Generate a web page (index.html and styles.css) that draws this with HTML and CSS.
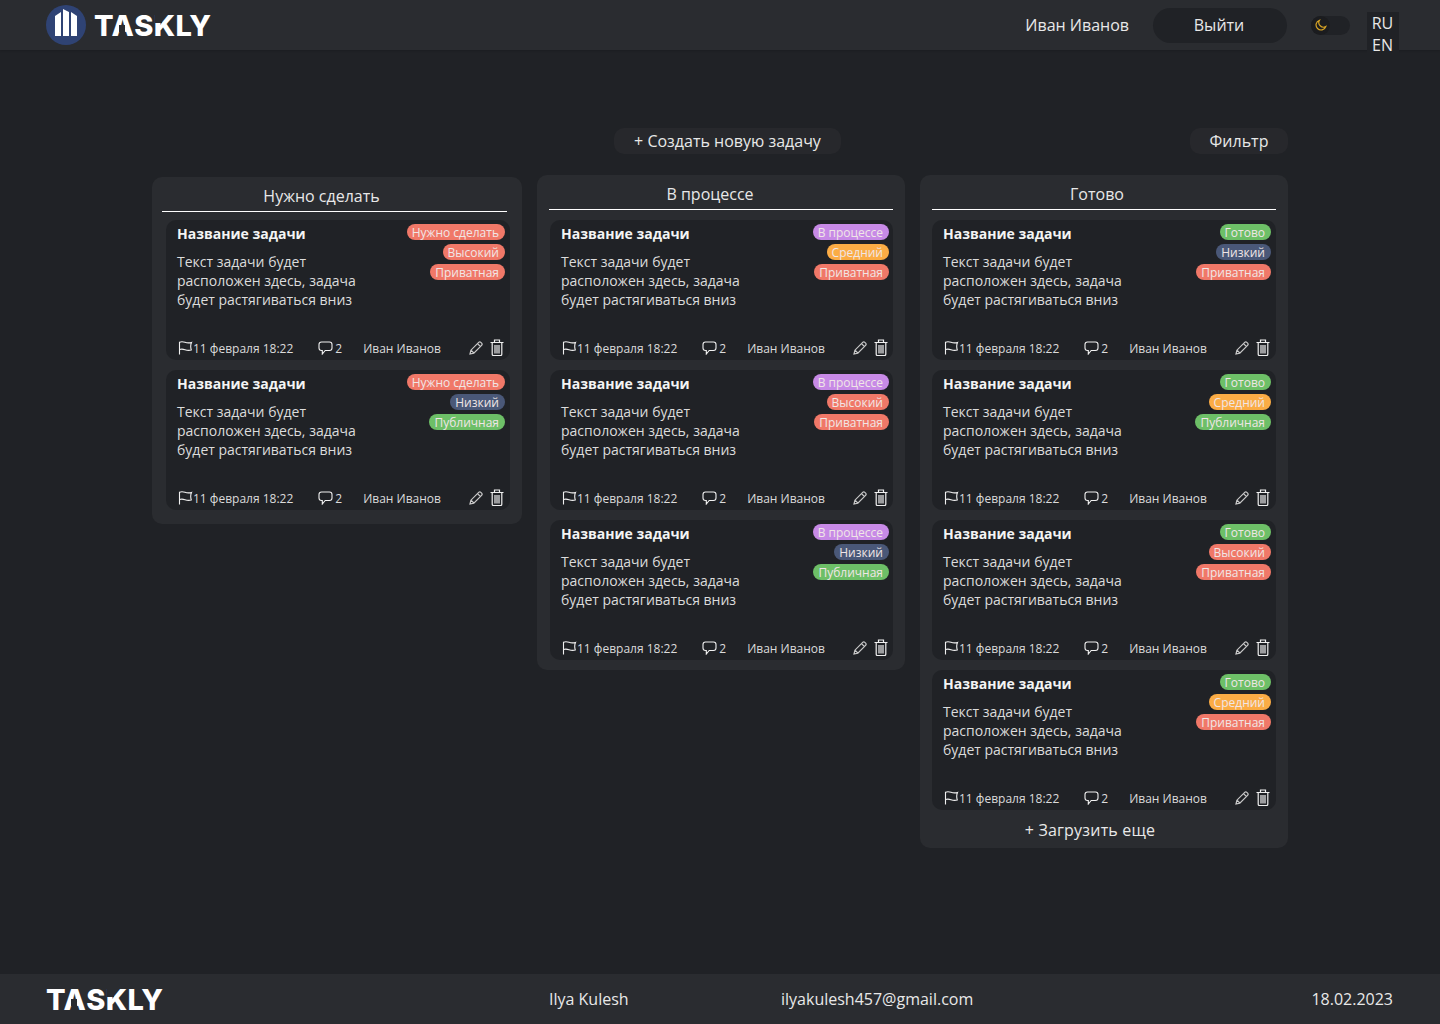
FILE: index.html
```html
<!DOCTYPE html>
<html lang="ru">
<head>
  <meta charset="UTF-8" />
  <title>Taskly</title>
  <link rel="stylesheet" href="styles.css">
</head>
<body>
  <svg class="sprite" width="0" height="0">
    <symbol id="i-flag" viewBox="0 0 15 14"><path d="M1.500 13.500V1.200c2-.8 3.600-.6 5.500.1 2 .7 4 .9 6.500.1-.8 1.700-.9 5.200-.2 7.600-2.300.7-4.300.4-6.300-.3-2-.7-3.600-.9-5.500-.2" fill="none" stroke="currentColor" stroke-width="1.100"/></symbol>
    <symbol id="i-comment" viewBox="0 0 15 14"><path d="M3.500 1h8c1.400 0 2.500 1 2.500 2.400v3.700c0 1.400-1.100 2.400-2.500 2.400H7.200L4.300 13V9.500h-.8C2.100 9.500 1 8.500 1 7.100V3.400C1 2 2.100 1 3.500 1z" fill="none" stroke="currentColor" stroke-width="1.100"/></symbol>
    <symbol id="i-pencil" viewBox="0 0 14 14"><path d="M1 13l.9-3.800L9.700 1.400c.6-.6 1.500-.6 2.100 0l.8.8c.6.6.6 1.500 0 2.100L4.800 12.100zM2 9.200l2.800 2.800M8.500 2.600l2.900 2.900" fill="none" stroke="currentColor" stroke-width="1.200"/></symbol>
    <symbol id="i-trash" viewBox="0 0 14 17"><path d="M.5 3.500h13M4.500 3.500V1h5v2.500M2.200 3.500v11.700c0 .8.500 1.300 1.300 1.300h7c.8 0 1.300-.5 1.300-1.300V3.500M5 6v8.500M7 6v8.500M9 6v8.500" fill="none" stroke="currentColor" stroke-width="1.200"/></symbol>
  </svg>

  <header class="topbar">
    <div class="brand">
      <svg class="brand-icon" viewBox="0 0 40 40" width="40" height="40">
        <circle cx="20" cy="20" r="20" fill="#2f4374"/>
        <path d="M9 11l6-4v24H9zM17 4l6 3v24h-6zM25 7l6 4v20h-6z" fill="#fff"/>
      </svg>
      <span class="logo">T<span class="logo-a">A</span>S<span class="logo-k">K</span>LY</span>
    </div>
    <span class="user">Иван Иванов</span>
    <button class="logout">Выйти</button>
    <div class="theme">
      <span class="theme-knob">
        <svg viewBox="0 0 12 12" width="12" height="12"><path d="M4.500 1.200A5 5 0 1 0 10.800 7.500 4.600 4.600 0 0 1 4.500 1.200z" fill="none" stroke="#d8a425" stroke-width="1.200"/></svg>
      </span>
    </div>
    <div class="lang"><span>RU</span><span>EN</span></div>
  </header>

  <main class="page">
    <div class="toolbar">
      <button class="tool tool-create">+ Создать новую задачу</button>
      <button class="tool tool-filter">Фильтр</button>
    </div>

    <div class="board">
      <section class="column column-first">
        <h2 class="column-title title-todo">Нужно сделать</h2>

        <article class="card">
          <div class="card-top">
            <div class="card-body">
              <h3>Название задачи</h3>
              <p>Текст задачи будет расположен здесь, задача будет растягиваться вниз</p>
            </div>
            <div class="tags">
              <span class="tag red">Нужно сделать</span>
              <span class="tag red">Высокий</span>
              <span class="tag red">Приватная</span>
            </div>
          </div>
          <div class="meta">
            <svg class="ico-flag"><use href="#i-flag"/></svg><span class="date">11 февраля 18:22</span>
            <svg class="ico-comment"><use href="#i-comment"/></svg><span class="count">2</span>
            <span class="author">Иван Иванов</span>
            <svg class="ico-pencil"><use href="#i-pencil"/></svg>
            <svg class="ico-trash"><use href="#i-trash"/></svg>
          </div>
        </article>

        <article class="card">
          <div class="card-top">
            <div class="card-body">
              <h3>Название задачи</h3>
              <p>Текст задачи будет расположен здесь, задача будет растягиваться вниз</p>
            </div>
            <div class="tags">
              <span class="tag red">Нужно сделать</span>
              <span class="tag navy">Низкий</span>
              <span class="tag green">Публичная</span>
            </div>
          </div>
          <div class="meta">
            <svg class="ico-flag"><use href="#i-flag"/></svg><span class="date">11 февраля 18:22</span>
            <svg class="ico-comment"><use href="#i-comment"/></svg><span class="count">2</span>
            <span class="author">Иван Иванов</span>
            <svg class="ico-pencil"><use href="#i-pencil"/></svg>
            <svg class="ico-trash"><use href="#i-trash"/></svg>
          </div>
        </article>
      </section>

      <section class="column column-second">
        <h2 class="column-title title-progress">В процессе</h2>

        <article class="card">
          <div class="card-top">
            <div class="card-body">
              <h3>Название задачи</h3>
              <p>Текст задачи будет расположен здесь, задача будет растягиваться вниз</p>
            </div>
            <div class="tags">
              <span class="tag purple">В процессе</span>
              <span class="tag orange">Средний</span>
              <span class="tag red">Приватная</span>
            </div>
          </div>
          <div class="meta">
            <svg class="ico-flag"><use href="#i-flag"/></svg><span class="date">11 февраля 18:22</span>
            <svg class="ico-comment"><use href="#i-comment"/></svg><span class="count">2</span>
            <span class="author">Иван Иванов</span>
            <svg class="ico-pencil"><use href="#i-pencil"/></svg>
            <svg class="ico-trash"><use href="#i-trash"/></svg>
          </div>
        </article>

        <article class="card">
          <div class="card-top">
            <div class="card-body">
              <h3>Название задачи</h3>
              <p>Текст задачи будет расположен здесь, задача будет растягиваться вниз</p>
            </div>
            <div class="tags">
              <span class="tag purple">В процессе</span>
              <span class="tag red">Высокий</span>
              <span class="tag red">Приватная</span>
            </div>
          </div>
          <div class="meta">
            <svg class="ico-flag"><use href="#i-flag"/></svg><span class="date">11 февраля 18:22</span>
            <svg class="ico-comment"><use href="#i-comment"/></svg><span class="count">2</span>
            <span class="author">Иван Иванов</span>
            <svg class="ico-pencil"><use href="#i-pencil"/></svg>
            <svg class="ico-trash"><use href="#i-trash"/></svg>
          </div>
        </article>

        <article class="card">
          <div class="card-top">
            <div class="card-body">
              <h3>Название задачи</h3>
              <p>Текст задачи будет расположен здесь, задача будет растягиваться вниз</p>
            </div>
            <div class="tags">
              <span class="tag purple">В процессе</span>
              <span class="tag navy">Низкий</span>
              <span class="tag green">Публичная</span>
            </div>
          </div>
          <div class="meta">
            <svg class="ico-flag"><use href="#i-flag"/></svg><span class="date">11 февраля 18:22</span>
            <svg class="ico-comment"><use href="#i-comment"/></svg><span class="count">2</span>
            <span class="author">Иван Иванов</span>
            <svg class="ico-pencil"><use href="#i-pencil"/></svg>
            <svg class="ico-trash"><use href="#i-trash"/></svg>
          </div>
        </article>
      </section>

      <section class="column">
        <h2 class="column-title title-done">Готово</h2>

        <article class="card">
          <div class="card-top">
            <div class="card-body">
              <h3>Название задачи</h3>
              <p>Текст задачи будет расположен здесь, задача будет растягиваться вниз</p>
            </div>
            <div class="tags">
              <span class="tag green">Готово</span>
              <span class="tag navy">Низкий</span>
              <span class="tag red">Приватная</span>
            </div>
          </div>
          <div class="meta">
            <svg class="ico-flag"><use href="#i-flag"/></svg><span class="date">11 февраля 18:22</span>
            <svg class="ico-comment"><use href="#i-comment"/></svg><span class="count">2</span>
            <span class="author">Иван Иванов</span>
            <svg class="ico-pencil"><use href="#i-pencil"/></svg>
            <svg class="ico-trash"><use href="#i-trash"/></svg>
          </div>
        </article>

        <article class="card">
          <div class="card-top">
            <div class="card-body">
              <h3>Название задачи</h3>
              <p>Текст задачи будет расположен здесь, задача будет растягиваться вниз</p>
            </div>
            <div class="tags">
              <span class="tag green">Готово</span>
              <span class="tag orange">Средний</span>
              <span class="tag green">Публичная</span>
            </div>
          </div>
          <div class="meta">
            <svg class="ico-flag"><use href="#i-flag"/></svg><span class="date">11 февраля 18:22</span>
            <svg class="ico-comment"><use href="#i-comment"/></svg><span class="count">2</span>
            <span class="author">Иван Иванов</span>
            <svg class="ico-pencil"><use href="#i-pencil"/></svg>
            <svg class="ico-trash"><use href="#i-trash"/></svg>
          </div>
        </article>

        <article class="card">
          <div class="card-top">
            <div class="card-body">
              <h3>Название задачи</h3>
              <p>Текст задачи будет расположен здесь, задача будет растягиваться вниз</p>
            </div>
            <div class="tags">
              <span class="tag green">Готово</span>
              <span class="tag red">Высокий</span>
              <span class="tag red">Приватная</span>
            </div>
          </div>
          <div class="meta">
            <svg class="ico-flag"><use href="#i-flag"/></svg><span class="date">11 февраля 18:22</span>
            <svg class="ico-comment"><use href="#i-comment"/></svg><span class="count">2</span>
            <span class="author">Иван Иванов</span>
            <svg class="ico-pencil"><use href="#i-pencil"/></svg>
            <svg class="ico-trash"><use href="#i-trash"/></svg>
          </div>
        </article>

        <article class="card">
          <div class="card-top">
            <div class="card-body">
              <h3>Название задачи</h3>
              <p>Текст задачи будет расположен здесь, задача будет растягиваться вниз</p>
            </div>
            <div class="tags">
              <span class="tag green">Готово</span>
              <span class="tag orange">Средний</span>
              <span class="tag red">Приватная</span>
            </div>
          </div>
          <div class="meta">
            <svg class="ico-flag"><use href="#i-flag"/></svg><span class="date">11 февраля 18:22</span>
            <svg class="ico-comment"><use href="#i-comment"/></svg><span class="count">2</span>
            <span class="author">Иван Иванов</span>
            <svg class="ico-pencil"><use href="#i-pencil"/></svg>
            <svg class="ico-trash"><use href="#i-trash"/></svg>
          </div>
        </article>

        <button class="load-more">+ Загрузить еще</button>
      </section>
    </div>
  </main>

  <footer class="footer">
    <span class="logo">T<span class="logo-a">A</span>S<span class="logo-k">K</span>LY</span>
    <span>Ilya Kulesh</span>
    <span>ilyakulesh457@gmail.com</span>
    <span>18.02.2023</span>
  </footer>
</body>
</html>
```

FILE: styles.css
```css
* {
  margin: 0;
  padding: 0;
  box-sizing: border-box;
}

html {
  font-family: "Open Sans", "Noto Sans", sans-serif;
}

body {
  background-color: #202226;
  color: #e8e8e8;
  min-height: 100vh;
  display: flex;
  flex-direction: column;
}

button {
  font: inherit;
  color: inherit;
  border: none;
  background: none;
}

.sprite {
  position: absolute;
}

/* header */
.topbar {
  height: 50px;
  background-color: #2a2c30;
  padding-left: 46px;
  display: flex;
  align-items: center;
  flex-shrink: 0;
  box-shadow: 0 1px 2px rgba(0, 0, 0, 0.15);
}

.brand {
  display: flex;
  align-items: center;
  gap: 8px;
  margin-right: auto;
}

.logo {
  font-family: Inter, sans-serif;
  font-weight: 800;
  font-size: 29px;
  line-height: 30px;
  letter-spacing: 0.4px;
  color: #fff;
  padding-top: 2px;
}

.logo-a,
.logo-k {
  position: relative;
}

/* the logo's A has no crossbar, its K has no upper stem */
.logo-a::after {
  content: "";
  position: absolute;
  left: 8px;
  width: 6px;
  bottom: 11px;
  height: 7px;
  background-color: #2a2c30;
}

.logo-k::after {
  content: "";
  position: absolute;
  left: 1px;
  width: 7px;
  top: 6px;
  height: 9px;
  background-color: #2a2c30;
}

.user {
  font-size: 16px;
  margin-right: 24px;
}

.logout {
  width: 134px;
  height: 35px;
  border-radius: 18px;
  background-color: #202226;
  font-size: 16px;
  padding-right: 2px;
  margin-right: 24px;
}

.theme {
  width: 39px;
  height: 19px;
  border-radius: 10px;
  background-color: #202226;
  margin-right: 17px;
}

.theme-knob {
  display: flex;
  align-items: center;
  justify-content: center;
  width: 19px;
  height: 19px;
  border-radius: 50%;
  background-color: #1b1c1f;
}

.lang {
  width: 32px;
  height: 49px;
  align-self: flex-start;
  margin-top: 12px;
  margin-right: 41px;
  padding-right: 1px;
  background-color: #202226;
  display: flex;
  flex-direction: column;
  align-items: center;
  font-size: 16px;
  line-height: 22px;
  position: relative;
  z-index: 1;
}

/* main */
.page {
  flex: 1;
  padding: 78px 152px 0;
}

.toolbar {
  display: flex;
  height: 26px;
  margin-bottom: 21px;
}

.tool {
  border-radius: 10px;
  background-color: #27282c;
  font-size: 16px;
  height: 26px;
}

.tool-create {
  width: 227px;
  margin-left: 462px;
}

.tool-filter {
  width: 98px;
  margin-left: auto;
}

.board {
  display: flex;
  align-items: flex-start;
  gap: 15px;
}

.column {
  width: 368px;
  background-color: #2a2c30;
  border-radius: 10px;
  padding: 0 12px 10px;
  display: flex;
  flex-direction: column;
  gap: 10px;
}

.column-first {
  width: 370px;
  margin-top: 2px;
  padding: 0 12px 14px 14px;
}

.column-second .card {
  margin-left: 1px;
  padding-right: 4px;
}

.column-title {
  font-size: 16px;
  font-weight: 400;
  height: 35px;
  line-height: 38px;
  text-align: center;
  border-bottom: 1px solid #fff;
}

.column-first .column-title {
  margin: 0 3px -2px -4px;
}

.title-todo { padding-right: 26px; }
.title-progress { padding-right: 22px; }
.title-done { padding-right: 14px; }

.card {
  height: 140px;
  background-color: #202226;
  border-radius: 10px;
  padding: 4px 5px 0 11px;
  display: flex;
  flex-direction: column;
}

.card-top {
  display: flex;
  justify-content: space-between;
  flex: 1;
}

.card-body {
  width: 190px;
}

.card-body h3 {
  font-size: 14px;
  font-weight: 700;
  line-height: 20px;
  color: #f4f4f4;
  white-space: nowrap;
  margin-bottom: 8px;
}

.card-body p {
  font-size: 14px;
  line-height: 19px;
  color: #dcdcdc;
}

.tags {
  display: flex;
  flex-direction: column;
  align-items: flex-end;
  gap: 4px;
}

.tag {
  height: 16px;
  line-height: 17px;
  padding: 0 6px 0 5px;
  border-radius: 8px;
  font-size: 12px;
  color: #f0e6e6;
  white-space: nowrap;
}

.red { background-color: #f07868; }
.navy { background-color: #4a5878; }
.green { background-color: #6dbf67; }
.purple { background-color: #c78ae6; }
.orange { background-color: #fbac45; }

.meta {
  display: flex;
  align-items: center;
  height: 24px;
  padding-left: 1px;
  margin-right: 1px;
  font-size: 12px;
  color: #dcdcdc;
}

.meta svg {
  flex-shrink: 0;
  color: #f0f0f0;
}

.ico-flag {
  width: 15px;
  height: 14px;
}

.date {
  margin-right: 25px;
}

.ico-comment {
  width: 15px;
  height: 14px;
  margin-right: 2px;
}

.author {
  margin-left: 21px;
  margin-right: auto;
}

.meta .ico-pencil {
  width: 14px;
  height: 14px;
  margin-right: 7px;
  color: #c9c9c9;
}

.ico-trash {
  width: 14px;
  height: 17px;
  margin-top: -2px;
}

.load-more {
  font-size: 16px;
  height: 18px;
  line-height: 20px;
  padding-right: 28px;
  letter-spacing: 0.2px;
}

/* footer */
.footer {
  height: 50px;
  flex-shrink: 0;
  background-color: #2a2c30;
  padding: 0 47px 0 46px;
  display: grid;
  grid-template-columns: 503px 232px 1fr auto;
  align-items: center;
  font-size: 16px;
}
```
